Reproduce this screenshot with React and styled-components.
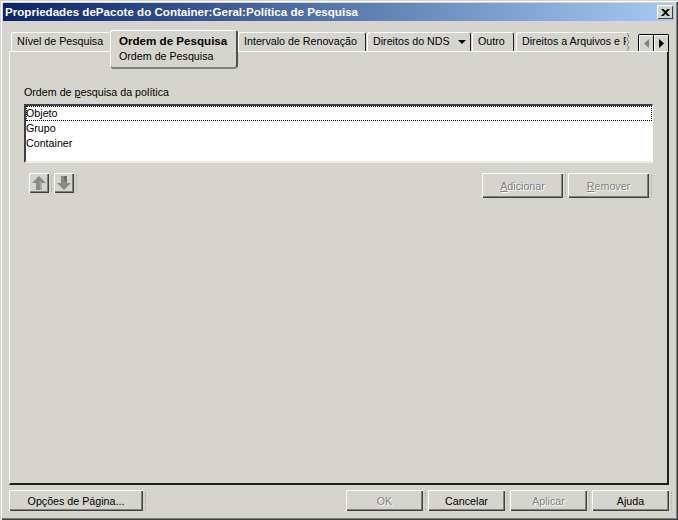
import React from "react";
import styled, { createGlobalStyle } from "styled-components";

const GlobalStyle = createGlobalStyle`
  html, body {
    margin: 0;
    padding: 0;
    background: #d6d5cd;
  }
  body {
    font-family: "Liberation Sans", Arial, sans-serif;
    font-size: 10.7px;
    color: #000;
  }
`;

const Window = styled.div`
  box-sizing: border-box;
  width: 678px;
  height: 520px;
  display: flex;
  flex-direction: column;
  padding: 3px 4px 9px 3px;
  background: #d6d5cd;
  box-shadow: inset 1px 1px 0 #d6d5cd, inset 2px 2px 0 #fff, inset -1px -1px 0 #404040, inset -2px -2px 0 #808080;
`;

const TitleBar = styled.div`
  height: 18px;
  flex: none;
  display: flex;
  align-items: center;
  justify-content: space-between;
  padding: 0 1px 0 2px;
  background: linear-gradient(to right, #0a246a, #a6caf0);
`;

const Title = styled.span`
  font-weight: bold;
  font-size: 11.6px;
  color: #fff;
  white-space: nowrap;
  margin-top: -1px;
`;

const CloseButton = styled.div`
  box-sizing: border-box;
  width: 16px;
  height: 14px;
  display: flex;
  align-items: center;
  justify-content: center;
  background: #d6d5cd;
  box-shadow: inset 1px 1px 0 #fff, inset -1px -1px 0 #404040;
`;

const TabBar = styled.div`
  height: 30px;
  flex: none;
  margin: 0 5px 0 6px;
  position: relative;
  display: flex;
  align-items: flex-end;
  padding-left: 2px;
`;

const Tab = styled.div`
  box-sizing: border-box;
  position: relative;
  width: ${(p) => p.$width}px;
  margin-right: ${(p) => p.$gap || 0}px;
  height: 19px;
  padding: 2px 0 0 5px;
  white-space: nowrap;
  overflow: hidden;
  border-top: 1px solid #fff;
  border-left: 1px solid #fff;
  border-right: 1px solid ${(p) => (p.$dark ? "#202020" : "#d6d5cd")};
  border-radius: 3px 3px 0 0;
`;

const TornEdge = styled.svg`
  position: absolute;
  right: 0;
  top: 0;
`;

const ActiveTab = styled.div`
  box-sizing: border-box;
  position: relative;
  z-index: 2;
  width: 128px;
  height: 39px;
  margin: 9px 0 0 0;
  align-self: flex-start;
  padding: 3px 0 0 8px;
  background: #d6d5cd;
  border-top: 1px solid #fff;
  border-left: 1px solid #fff;
  border-right: 2px solid #505050;
  border-bottom: 2px solid #808080;
  border-radius: 3px 3px 4px 4px;
  line-height: 13px;
`;

const ActiveTitle = styled.div`
  font-weight: bold;
  font-size: 11.6px;
`;

const ActiveSub = styled.div`
  margin-top: 3px;
`;

const Caret = styled.span`
  display: inline-block;
  margin-left: 8px;
  vertical-align: middle;
  border-left: 4px solid transparent;
  border-right: 4px solid transparent;
  border-top: 4px solid #000;
`;

const ScrollButtons = styled.div`
  position: absolute;
  right: 0;
  top: 13px;
  display: flex;
  box-sizing: border-box;
  height: 17px;
  border: 1px solid #000;
  border-bottom: none;
  border-radius: 2px 2px 0 0;
  background: #d6d5cd;
`;

const ScrollButton = styled.div`
  width: 14px;
  display: flex;
  align-items: center;
  justify-content: center;
  box-shadow: inset 1px 1px 0 #fff;
  & + & {
    border-left: 1px solid #000;
  }
`;

const Panel = styled.div`
  box-sizing: border-box;
  flex: 1;
  margin: 0 5px 0 6px;
  display: flex;
  flex-direction: column;
  padding: 33px 14px 0 14px;
  border-top: 1px solid #fff;
  border-left: 1px solid #fff;
  border-right: 2px solid #202020;
  border-bottom: 2px solid #202020;
`;

const FieldLabel = styled.div`
  height: 15px;
  line-height: 15px;
  margin-bottom: 4px;
`;

const List = styled.div`
  box-sizing: border-box;
  height: 59px;
  flex: none;
  background: #fff;
  border-top: 2px solid #404040;
  border-left: 2px solid #404040;
  border-right: 1px solid #fff;
  border-bottom: 2px solid #eeece6;
`;

const ListRow = styled.div`
  box-sizing: border-box;
  height: 15px;
  line-height: 13px;
  text-indent: -1px;
  border: 1px dotted ${(p) => (p.$focused ? "#000" : "transparent")};
`;

const ActionRow = styled.div`
  display: flex;
  align-items: flex-start;
  justify-content: space-between;
  margin-top: 10px;
  padding: 0 4px 0 5px;
`;

const ButtonGroup = styled.div`
  display: flex;
  gap: ${(p) => p.$gap}px;
`;

const Button = styled.div`
  box-sizing: border-box;
  position: relative;
  flex: none;
  display: flex;
  align-items: center;
  justify-content: center;
  width: ${(p) => p.$width}px;
  height: ${(p) => p.$height}px;
  background: #d6d5cd;
  box-shadow: inset 1px 1px 0 #fff, inset -1px -1px 0 #404040, inset -2px -2px 0 #808080;
  color: ${(p) => (p.$disabled ? "#808080" : "#000")};
  text-shadow: ${(p) => (p.$disabled ? "1px 1px 0 #fff" : "none")};
  &::after {
    content: "";
    position: absolute;
    top: 2px;
    bottom: 1px;
    right: -3px;
    border-right: 1px dotted #a8a8a0;
  }
`;

const Footer = styled.div`
  height: 21px;
  flex: none;
  margin: 5px 5px 0 6px;
  display: flex;
  justify-content: space-between;
`;

const Arrow = ({ up }) => (
  <svg width="16" height="16" viewBox="0 0 16 16">
    <g transform={up ? undefined : "rotate(180 8 8)"}>
      <polygon points="8,1 15,8 11,8 11,15 5,15 5,8 1,8" fill="#8a8a86" />
      <polygon
        points={up ? "8,5 11,8 11,15 9,15 9,8" : "5,15 8,15 8,11 5,8"}
        fill={up ? "#a8a8a4" : "#6e6e6a"}
      />
    </g>
  </svg>
);

export default function App() {
  return (
    <>
      <GlobalStyle />
      <Window>
        <TitleBar>
          <Title>Propriedades dePacote do Container:Geral:Política de Pesquisa</Title>
          <CloseButton>
            <svg width="9" height="7" viewBox="0 0 9 7">
              <path d="M0 0h2.500l2 2 2-2H9L5.800 3.500 9 7H6.500l-2-2-2 2H0l3.200-3.500z" fill="#000" />
            </svg>
          </CloseButton>
        </TitleBar>
        <TabBar>
          <Tab $width={99}>Nível de Pesquisa</Tab>
          <ActiveTab>
            <ActiveTitle>Ordem de Pesquisa</ActiveTitle>
            <ActiveSub>Ordem de Pesquisa</ActiveSub>
          </ActiveTab>
          <Tab $width={128} $gap={1} $dark>Intervalo de Renovação</Tab>
          <Tab $width={104} $gap={1} $dark>Direitos do NDS<Caret /></Tab>
          <Tab $width={42} $gap={2} $dark>Outro</Tab>
          <Tab $width={115}>
            Direitos a Arquivos e P
            <TornEdge width="4" height="18" viewBox="0 0 4 18">
              <rect width="4" height="18" fill="#d6d5cd" />
              <path d="M1 0l2 3-2 3 2 3-2 3 2 3-2 3" fill="none" stroke="#808080" />
            </TornEdge>
          </Tab>
          <ScrollButtons>
            <ScrollButton>
              <svg width="5" height="9" viewBox="0 0 5 9"><path d="M5 0v9L0 4.500z" fill="#808080" /></svg>
            </ScrollButton>
            <ScrollButton>
              <svg width="5" height="9" viewBox="0 0 5 9"><path d="M0 0v9l5-4.500z" fill="#000" /></svg>
            </ScrollButton>
          </ScrollButtons>
        </TabBar>
        <Panel>
          <FieldLabel>Ordem de <u>p</u>esquisa da política</FieldLabel>
          <List>
            <ListRow $focused>Objeto</ListRow>
            <ListRow>Grupo</ListRow>
            <ListRow>Container</ListRow>
          </List>
          <ActionRow>
            <ButtonGroup $gap={5}>
              <Button $width={20} $height={20}><Arrow up /></Button>
              <Button $width={20} $height={20}><Arrow /></Button>
            </ButtonGroup>
            <ButtonGroup $gap={5}>
              <Button $width={81} $height={25} $disabled><span><u>A</u>dicionar</span></Button>
              <Button $width={81} $height={25} $disabled><span><u>R</u>emover</span></Button>
            </ButtonGroup>
          </ActionRow>
        </Panel>
        <Footer>
          <Button $width={134} $height={21}><span>Opções de Pá<u>g</u>ina...</span></Button>
          <ButtonGroup $gap={5}>
            <Button $width={77} $height={21} $disabled>OK</Button>
            <Button $width={77} $height={21}>Cancelar</Button>
            <Button $width={77} $height={21} $disabled>Aplicar</Button>
            <Button $width={77} $height={21}>Ajuda</Button>
          </ButtonGroup>
        </Footer>
      </Window>
    </>
  );
}
